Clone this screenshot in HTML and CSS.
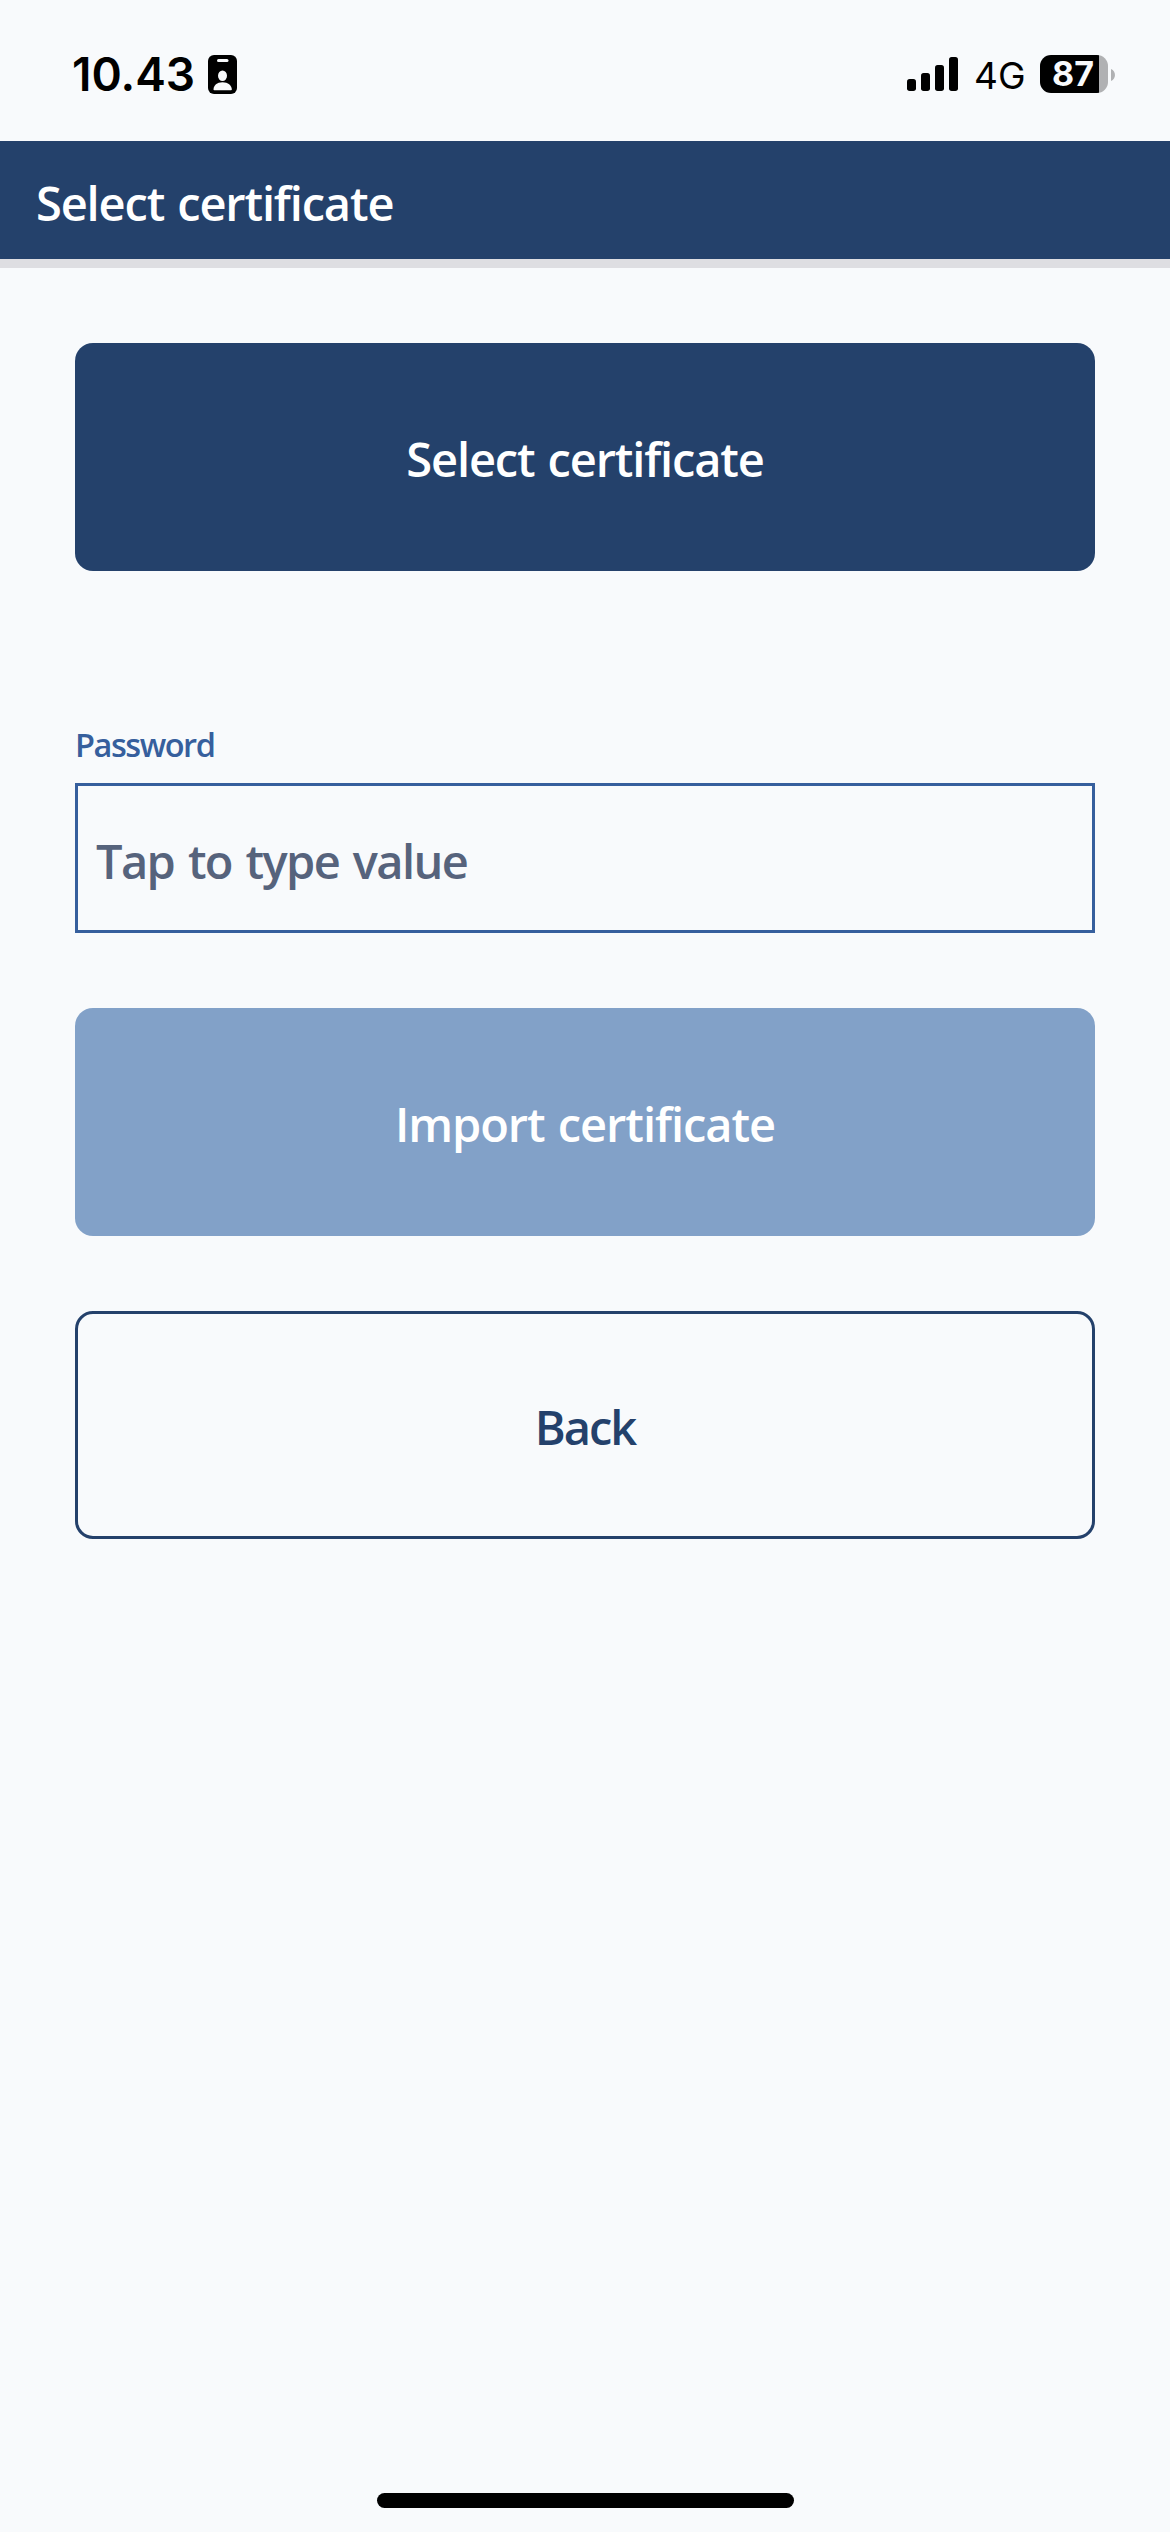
FILE: index.html
```html
<!DOCTYPE html>
<html lang="en">
<head>
<meta charset="utf-8">
<title>Select certificate</title>
<link rel="stylesheet" href="styles.css">
</head>
<body>
<div class="status-bar">
  <div class="status-left">
    <span class="time">10.43</span>
    <svg class="id-icon" width="29" height="39" viewBox="0 0 29 39">
      <rect width="29" height="39" rx="6"/>
      <rect x="9" y="4" width="11.500" height="3" rx="1.500" fill="#f8fafc"/>
      <ellipse cx="14.500" cy="20.800" rx="4.500" ry="5.200" fill="#f8fafc"/>
      <path d="M5.500 34.500C5.500 30.500 9 27.300 14.500 27.300S23.800 30.500 23.800 34.500Q23.800 35.300 23 35.300H6.300Q5.500 35.300 5.500 34.500Z" fill="#f8fafc"/>
    </svg>
  </div>
  <div class="status-right">
    <svg class="signal" width="51" height="34" viewBox="0 0 51 34">
      <rect x="0" y="22" width="9" height="12" rx="2.700"/>
      <rect x="14" y="16" width="9" height="18" rx="2.700"/>
      <rect x="28" y="8" width="9" height="26" rx="2.700"/>
      <rect x="42" y="0" width="9" height="34" rx="2.700"/>
    </svg>
    <span class="network">4G</span>
    <div class="battery"><span class="level">87</span></div>
    <svg class="battery-tip" width="4" height="12" viewBox="0 0 4 12"><path d="M0 0C5.300 2 5.300 10 0 12Z" fill="#b0b1b3"/></svg>
  </div>
</div>
<header class="app-header"><h1 class="title">Select certificate</h1></header>
<main class="content">
  <button class="btn btn-primary"><span class="label-select">Select certificate</span></button>
  <div class="field">
    <label class="field-label" for="password">Password</label>
    <div class="field-box" id="password"><span class="placeholder">Tap to type value</span></div>
  </div>
  <button class="btn btn-disabled"><span class="label-import">Import certificate</span></button>
  <button class="btn btn-outline"><span class="label-back">Back</span></button>
</main>
<div class="home-indicator"></div>
</body>
</html>
```

FILE: styles.css
```css
* { box-sizing: border-box; }

body {
  margin: 0;
  width: 1170px;
  height: 2532px;
  display: flex;
  flex-direction: column;
  background: #f8fafc;
  font-family: "Open Sans", "Noto Sans", sans-serif;
  font-weight: 600;
  font-variant-ligatures: none;
  overflow: hidden;
}

.status-bar {
  height: 141px;
  padding: 55px 55px 0 72px;
  display: flex;
  justify-content: space-between;
  align-items: flex-start;
  font-family: Inter, sans-serif;
  color: #000;
}

.status-left,
.status-right {
  display: flex;
  height: 39px;
}

.time {
  width: 136px;
  font-size: 46px;
  line-height: 39px;
  letter-spacing: 0;
  white-space: nowrap;
}

.signal { margin-top: 2px; }

.network {
  width: 82px;
  padding-left: 16px;
  font-size: 37px;
  font-weight: 400;
  line-height: 41px;
  white-space: nowrap;
}

.battery {
  width: 68px;
  height: 38px;
  padding-right: 2px;
  border-radius: 11px;
  background: linear-gradient(to right, #000 59px, #b0b1b3 59px);
  text-align: center;
}

.level {
  color: #f8fafc;
  font-size: 34px;
  font-weight: 700;
  line-height: 38px;
}

.battery-tip { margin: 14px 0 0 3px; }

.app-header {
  height: 127px;
  padding: 5px 36px 0;
  background: #24416b;
  border-bottom: 9px solid #dedee2;
  display: flex;
  align-items: center;
}

.title {
  margin: 0;
  font-size: 47px;
  font-weight: 600;
  line-height: 64px;
  letter-spacing: -1.150px;
  word-spacing: 2px;
  color: #fff;
}

.content {
  padding: 75px 75px 0;
  display: flex;
  flex-direction: column;
  gap: 75px;
}

.btn {
  height: 228px;
  padding: 3px 0 0;
  border: 0;
  border-radius: 18px;
  font: inherit;
  font-size: 47px;
  line-height: 64px;
  letter-spacing: -1.150px;
  word-spacing: 2px;
  color: #fff;
}

.btn-primary { background: #24416b; }

.btn-disabled {
  background: #82a1c8;
  letter-spacing: -1.050px;
}

.btn-outline {
  border: 3px solid #24416b;
  background: transparent;
  color: #24416b;
  letter-spacing: -2px;
}

.field {
  padding-top: 76px;
  display: flex;
  flex-direction: column;
}

.field-label {
  height: 61px;
  padding-top: 1px;
  font-size: 32.500px;
  line-height: 44px;
  letter-spacing: -1.450px;
  color: #365f9d;
}

.field-box {
  height: 150px;
  padding: 5px 18px 0;
  border: 3px solid #365f9d;
  display: flex;
  align-items: center;
  font-size: 47px;
  line-height: 64px;
  letter-spacing: -1.600px;
  word-spacing: 3px;
  color: #56637c;
}

.home-indicator {
  width: 417px;
  height: 15px;
  margin: auto auto 24px;
  border-radius: 8px;
  background: #000;
}
```
